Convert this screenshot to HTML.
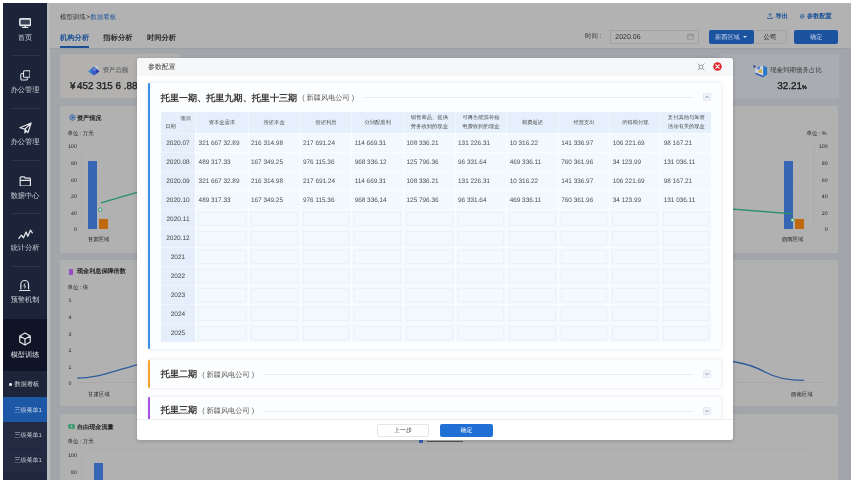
<!DOCTYPE html>
<html lang="zh">
<head>
<meta charset="utf-8">
<title>数据看板</title>
<style>
*{box-sizing:border-box;margin:0;padding:0}
html,body{width:857px;height:487px;background:#fff;overflow:hidden}
body{font-family:"Liberation Sans",sans-serif;position:relative;color:#333;text-rendering:geometricPrecision;filter:blur(0.5px)}
.abs{position:absolute}
#frame{position:absolute;left:3px;top:3px;width:848px;height:477px;background:#a2a6aa;overflow:hidden}
/* sidebar */
#side{position:absolute;left:0;top:0;width:44px;height:477px;background:#1c2439}
.mi{position:absolute;left:0;width:44px;text-align:center;color:#cdd0d7;font-size:7.2px;line-height:8px}
.mi svg{display:block;margin:0 auto 5px}.mi svg.w{margin-bottom:4.5px}
.sep{position:absolute;left:7.6px;width:29.4px;height:1px;background:#2c3449}
.sub{position:absolute;left:0;width:44px;height:25px;line-height:25px;color:#c3c7cf;font-size:6px;padding-left:11.5px}
/* header */
#hdr{position:absolute;left:44px;top:0;width:804px;height:45.3px;background:#b2b2b2;box-shadow:0 0.5px 1.5px rgba(0,0,0,.12)}
.t{position:absolute;white-space:nowrap;line-height:1}
.yl{font-size:5.2px;color:#1c1c1c}
.card{position:absolute;background:#b1b1b1;border-radius:2px}
/* dialog */
#dlg{position:absolute;left:137px;top:58px;width:596px;height:382px;background:#fff;border-radius:3px;overflow:hidden;box-shadow:0 1px 4px rgba(0,0,0,.18)}
#dh{position:absolute;left:0;top:0;width:596px;height:18.3px;background:#f6f7f9}
.pn{position:absolute;left:11px;width:574.2px;background:#fcfdfe;border:1px solid #f0f3f7;border-radius:3px;box-shadow:0 0 4px rgba(60,80,120,.09)}
.bar{position:absolute;left:-1.4px;top:0;bottom:0;width:2.4px;border-radius:1.2px}
.pt{position:absolute;left:11.8px;font-size:9.1px;font-weight:bold;color:#3a3a3a;white-space:nowrap;line-height:12px}
.pt small{font-size:7.2px;font-weight:400;color:#5a5a5a;margin-left:5px;position:relative;top:-0.3px}
.pl{position:absolute;height:1px;background:#eaedf1}
.tg{position:absolute;width:8px;height:8px;border:1px solid #e3e9f2;background:#f1f5fb;border-radius:1px}
/* table */
#tb{position:absolute;left:11.8px;top:28.8px;width:551.2px}
.tr{display:flex;height:19.04px}
.tr.th{height:20.8px}
.c0{width:34.4px;flex:none;background:#e4effb;font-size:6.5px;color:#444;text-align:center;line-height:19.04px;position:relative}
.c{width:51.68px;flex:none;position:relative;font-size:6.4px;color:#444}
.hd span{position:relative;top:1.1px}
.hd{background:#e6f0fc;border-left:1px solid #f2f7fd;display:flex;align-items:center;justify-content:center;text-align:center;font-size:5.3px;line-height:9.4px;color:#4c4c4c}
.hd0 .h0a{position:absolute;right:4px;top:4.4px;font-size:5.3px;line-height:6px;color:#4c4c4c}
.hd0 .h0b{position:absolute;left:4.5px;bottom:2.8px;font-size:5.3px;line-height:6px;color:#4c4c4c}
.diag{position:absolute;left:0;top:0}
.v{border-left:1px solid #fafcff;border-top:1px solid #fafcff;background:#f1f8fe;color:#505050;line-height:18.04px;padding-left:2.4px;white-space:nowrap}
.v i{font-style:normal;position:relative;top:1px}
.d0{border-top:1px solid #ecf4fc;line-height:18.04px;padding-top:1px}
.e i{position:absolute;left:2px;right:2px;top:2px;bottom:2px;border:1px solid #e9f1f9;background:#f3f9fe}
.tr>.c:nth-child(2){width:52.4px}.tr>.c:nth-child(3){width:52.0px}.tr>.c:nth-child(4){width:51.7px}.tr>.c:nth-child(5){width:51.9px}.tr>.c:nth-child(6){width:51.5px}.tr>.c:nth-child(7){width:51.6px}.tr>.c:nth-child(8){width:51.6px}.tr>.c:nth-child(9){width:51.4px}.tr>.c:nth-child(10){width:51.1px}.tr>.c:nth-child(11){width:51.1px}
</style>
</head>
<body>
<div id="frame">

  <!-- main header -->
  <div id="hdr">
    <div class="t" style="left:13px;top:11.9px;font-size:6.4px;color:#2a2a2a">模型训练<span style="margin:0 0.6px">&gt;</span><span style="color:#1d559d">数据看板</span></div>
    <div class="t" style="left:13px;top:30.5px;font-size:7.3px;color:#1a4f96;font-weight:bold">机构分析</div>
    <div class="t" style="left:56.3px;top:30.5px;font-size:7.3px;color:#2b2b2b;font-weight:bold">指标分析</div>
    <div class="t" style="left:99.9px;top:30.5px;font-size:7.3px;color:#2b2b2b;font-weight:bold">时间分析</div>
    <div class="abs" style="left:13px;top:42.7px;width:29px;height:2.6px;background:#1b4f94"></div>

    <svg class="abs" style="left:719.8px;top:10.2px" width="6.2" height="6.2" viewBox="0 0 14 14"><path d="M7 1 L7 9 M4 4 L7 1 L10 4 M1.5 9.5 V12.5 H12.5 V9.5" fill="none" stroke="#1d559d" stroke-width="1.8"/></svg>
    <div class="t" style="left:728.6px;top:11.1px;font-size:6.2px;color:#1b519a;font-weight:bold">导出</div>
    <svg class="abs" style="left:752.4px;top:10.4px" width="6.6" height="6.6" viewBox="0 0 14 14"><circle cx="7" cy="7" r="4" fill="none" stroke="#1d559d" stroke-width="2.4" stroke-dasharray="2 1.2"/><circle cx="7" cy="7" r="1.5" fill="#1d559d"/></svg>
    <div class="t" style="left:760px;top:11.1px;font-size:6.2px;color:#1b519a;font-weight:bold">参数配置</div>

    <div class="t" style="left:538px;top:31.4px;font-size:6.4px;color:#333">时间 :</div>
    <div class="abs" style="left:563.3px;top:27px;width:88.5px;height:13.6px;border:1px solid #a2a2a2;background:#b3b3b3;border-radius:1px"></div>
    <div class="t" style="left:568.3px;top:30.9px;font-size:7px;color:#333">2020.06</div>
    <svg class="abs" style="left:639.8px;top:30.2px" width="7" height="7" viewBox="0 0 14 14"><rect x="1.5" y="3" width="11" height="9.5" fill="none" stroke="#8a8a8a" stroke-width="1.4"/><path d="M1.5 6 H12.5 M4.5 1 V4 M9.5 1 V4" stroke="#8a8a8a" stroke-width="1.4"/></svg>

    <div class="abs" style="left:662px;top:27px;width:78px;height:13.5px;border:1px solid #a3a3a3;background:#b0b0b0;border-radius:2px"></div>
    <div class="abs" style="left:662px;top:27px;width:44.5px;height:13.5px;background:#1b53a0;border-radius:2px"></div>
    <div class="t" style="left:668px;top:31.5px;font-size:6.2px;color:#c9d6ea">新西区域</div>
    <div class="abs" style="left:696.2px;top:33.3px;width:0;height:0;border-left:2px solid transparent;border-right:2px solid transparent;border-top:2.4px solid #d6dfee"></div>
    <div class="t" style="left:716.5px;top:31.5px;font-size:6.4px;color:#222">公司</div>
    <div class="abs" style="left:747px;top:27px;width:44px;height:13.5px;background:#1b53a0;border-radius:2px"></div>
    <div class="t" style="left:763px;top:31.5px;font-size:6.2px;color:#c9d6ea">确定</div>
  </div>

  <!-- stat cards -->
  <div class="card" style="left:56.5px;top:51.4px;width:120px;height:44px;background:#b2b1b0"></div>
  <svg class="abs" style="left:82px;top:57px" width="26" height="22" viewBox="85 60 26 22"><path d="M88.4 71.6 L93.6 66.8 L99.3 71.2 L94.2 75.6 Z" fill="#3a5cc4"/><path d="M88.4 71.6 L91 69.2 L92 73.9 Z" fill="#2b8fd2"/><path d="M99.3 71.2 L96.6 69.2 L96.4 73.7 Z" fill="#1b2fa6"/><path d="M92.2 69.6 L94.2 68 L96.4 69.6 L94.3 71.3 Z" fill="#6b86dc"/><path d="M95 66.6 L97.6 66 L98 68.4 Z" fill="#c9d4e2"/></svg>
  <div class="t" style="left:99.8px;top:65.3px;font-size:6.3px;color:#4a4a4a">资产总额</div>
  <div class="t" style="left:67px;top:79px;font-size:9.9px;color:#1e1e1e;-webkit-text-stroke:0.32px #1e1e1e">¥<span style="margin-left:1.6px">452 315 6 .88</span></div>

  <div class="card" style="left:715px;top:51.4px;width:121px;height:44.4px;background:#a9adb2"></div>
  <svg class="abs" style="left:745px;top:55px" width="30" height="26" viewBox="748 58 30 26"><circle cx="754.4" cy="66.4" r="1.15" fill="#1b3f88"/><path d="M755.4 69.3 L763.2 65.4 L763.2 77.2 L755.4 73.6 Z" fill="#cfd8e4"/><path d="M763.2 65.4 L767.2 67.6 L767.2 74.6 L763.2 77.2 Z" fill="#2a76c9"/><path d="M758.4 70.2 L762 68.8 L762 73.2 L758.4 72.6 Z" fill="#d3b33e"/><path d="M755.4 72.4 L763.2 75.8 L763.2 77.4 L755.4 74 Z" fill="#2e55b6"/><path d="M757.5 67.2 L760 66 L760 69 L757.5 70 Z" fill="#5a7fd6"/></svg>
  <div class="t" style="left:767px;top:65.2px;font-size:6.5px;color:#333">现金到期债务占比</div>
  <div class="t" style="left:774.3px;top:79px;font-size:9.9px;color:#1e1e1e;-webkit-text-stroke:0.32px #1e1e1e">32.21<span style="font-size:5.4px;font-weight:bold">%</span></div>

  <!-- chart card 1 -->
  <div class="card" style="left:56.7px;top:102.8px;width:778.5px;height:147.6px"></div>
  <svg class="abs" style="left:65.5px;top:111.4px" width="7" height="7" viewBox="0 0 14 14"><circle cx="7" cy="7" r="5.4" fill="none" stroke="#1f5aa8" stroke-width="1.6"/><circle cx="7" cy="7" r="2.4" fill="#1f5aa8"/></svg>
  <div class="t" style="left:74px;top:112.7px;font-size:6.1px;color:#222;font-weight:bold">资产情况</div>
  <div class="t" style="left:64.5px;top:128.9px;font-size:5.4px;color:#222">单位 : 万元</div>
  <div class="t" style="left:803.5px;top:128.9px;font-size:5.4px;color:#222">单位 : %</div>
  <div class="abs" style="left:78px;top:143.5px;width:733px;height:82.5px;background:repeating-linear-gradient(to bottom,#b5b5b5 0,#b5b5b5 0.8px,rgba(0,0,0,0) 0.8px,rgba(0,0,0,0) 16.6px);border-left:1px solid #adadad;border-right:1px solid #ababab"></div>
  <div class="t yl" style="right:774.2px;top:142.3px">100</div>
  <div class="t yl" style="right:774.2px;top:159.0px">80</div>
  <div class="t yl" style="right:774.2px;top:175.6px">60</div>
  <div class="t yl" style="right:774.2px;top:192.2px">20</div>
  <div class="t yl" style="right:774.2px;top:208.8px">40</div>
  <div class="t yl" style="right:774.2px;top:225.4px">0</div>
  <div class="t yl" style="right:23.4px;top:142.3px">100</div>
  <div class="t yl" style="right:23.4px;top:159.0px">80</div>
  <div class="t yl" style="right:23.4px;top:175.6px">60</div>
  <div class="t yl" style="right:23.4px;top:192.2px">40</div>
  <div class="t yl" style="right:23.4px;top:208.8px">20</div>
  <div class="t yl" style="right:23.4px;top:225.4px">0</div>
  <div class="abs" style="left:85px;top:158px;width:9px;height:68px;background:#3565b3"></div>
  <div class="abs" style="left:96.1px;top:216.3px;width:9px;height:9.7px;background:#c0690f"></div>
  <div class="abs" style="left:780.5px;top:158px;width:9px;height:68px;background:#3565b3"></div>
  <div class="abs" style="left:792px;top:216.3px;width:9px;height:9.7px;background:#c0690f"></div>
  <svg class="abs" style="left:57px;top:101px" width="778" height="148" viewBox="57 101 778 148"><path d="M98 199.9 L134 189.4 L300 141 L560 192.8 L730 206.2 L789.5 210.8" fill="none" stroke="#2a9068" stroke-width="1.35"/><circle cx="97.3" cy="206.7" r="1.7" fill="#d8e8df" stroke="#2a8f66" stroke-width="0.9"/><circle cx="789.5" cy="217" r="1.7" fill="#d8e8df" stroke="#2a8f66" stroke-width="0.9"/></svg>
  <div class="t" style="left:85px;top:234.8px;font-size:5.3px;color:#222">甘肃区域</div>
  <div class="t" style="left:779px;top:234.8px;font-size:5.3px;color:#222">西南区域</div>

  <!-- chart card 2 -->
  <div class="card" style="left:56.7px;top:256.8px;width:778.5px;height:146px"></div>
  <div class="abs" style="left:66.2px;top:266.2px;width:3.8px;height:5.4px;border-radius:0.8px;background:#8e4fc0"></div>
  <div class="t" style="left:74px;top:266.4px;font-size:6.1px;color:#222;font-weight:bold">现金利息保障倍数</div>
  <div class="t" style="left:64.5px;top:283.2px;font-size:5.4px;color:#222">单位 : 倍</div>
  <div class="abs" style="left:74px;top:297.4px;width:750px;height:83.1px;background:repeating-linear-gradient(to bottom,#b5b5b5 0,#b5b5b5 0.8px,rgba(0,0,0,0) 0.8px,rgba(0,0,0,0) 16.6px);border-left:1px solid #adadad;border-bottom:1px solid #a9a9a9"></div>
  <div class="t yl" style="left:65.6px;top:296.4px">5</div>
  <div class="t yl" style="left:65.6px;top:313.0px">4</div>
  <div class="t yl" style="left:65.6px;top:329.6px">3</div>
  <div class="t yl" style="left:65.6px;top:346.2px">2</div>
  <div class="t yl" style="left:65.6px;top:362.8px">1</div>
  <div class="t yl" style="left:65.6px;top:379.4px">0</div>
  <svg class="abs" style="left:57px;top:257px" width="778" height="146" viewBox="57 257 778 146"><path d="M74.3 375.2 C 92 375.2, 104 370, 134 361.8 C 260 328, 640 330, 730 358.5 C 744 360.5, 754 364.5, 763 369.5 S 787 377.4, 800.8 377.4" fill="none" stroke="#2d5c9c" stroke-width="1.3"/></svg>
  <div class="t" style="left:85px;top:389.5px;font-size:5.4px;color:#222">甘肃区域</div>
  <div class="t" style="left:788px;top:389.5px;font-size:5.4px;color:#222">西南区域</div>

  <!-- chart card 3 -->
  <div class="card" style="left:56.7px;top:411.2px;width:778.5px;height:80px"></div>
  <svg class="abs" style="left:65px;top:420.8px" width="7" height="5" viewBox="0 0 14 10"><rect x="0.5" y="0.5" width="13" height="9" rx="2" fill="#2f9a6a"/><circle cx="7" cy="5" r="2.2" fill="#b1b1b1"/></svg>
  <div class="t" style="left:74px;top:421.7px;font-size:6.1px;color:#222;font-weight:bold">自由现金流量</div>
  <div class="t" style="left:64.5px;top:437.1px;font-size:5.4px;color:#222">单位 : 万元</div>
  <div class="abs" style="left:78px;top:452.2px;width:733px;height:40px;background:repeating-linear-gradient(to bottom,#b5b5b5 0,#b5b5b5 0.8px,rgba(0,0,0,0) 0.8px,rgba(0,0,0,0) 16.6px);border-left:1px solid #adadad"></div>
  <div class="t yl" style="right:774.2px;top:450.5px">100</div>
  <div class="t yl" style="right:774.2px;top:467.8px">80</div>
  <div class="abs" style="left:91px;top:460px;width:9px;height:20px;background:#3565b3"></div>
  <div class="abs" style="left:416px;top:437.2px;width:3.5px;height:2.5px;background:#3565b3"></div>
  <div class="abs" style="left:424px;top:438.2px;width:36px;height:1.2px;background:#555"></div>

  <div class="abs" style="left:44.4px;top:0;width:2.2px;height:477px;background:#b8babc"></div>
  <!-- sidebar -->
  <div id="side">
    <div class="mi" style="top:14.8px"><svg style="margin-bottom:5.6px" width="12.4" height="10.4" viewBox="0 0 24 20"><rect x="1.6" y="1.6" width="20.8" height="12.6" rx="1.6" fill="#3a4258" stroke="#e4e6ea" stroke-width="3"/><path d="M6 18.6 H18 M12 15 V18" stroke="#e4e6ea" stroke-width="2.6"/></svg>首页</div>
    <div class="sep" style="top:52px"></div>
    <div class="mi" style="top:66.9px"><svg style="margin-bottom:5.1px" width="10.8" height="10.8" viewBox="0 0 20 20"><rect x="6.5" y="1.5" width="12" height="12" rx="2" fill="none" stroke="#e4e6ea" stroke-width="2"/><path d="M6 6.5 H3.5 a2 2 0 0 0 -2 2 V16.5 a2 2 0 0 0 2 2 H11.5 a2 2 0 0 0 2 -2 V14" fill="none" stroke="#e4e6ea" stroke-width="2"/></svg>办公管理</div>
    <div class="sep" style="top:104.5px"></div>
    <div class="mi" style="top:119px"><svg style="margin-bottom:4.2px" width="13" height="12" viewBox="0 0 22 20"><path d="M1.5 9.5 L20.5 1.5 L15 18 L10 12 Z M10 12 L20.5 1.5 M10 12 V18.5 L12.5 15" fill="none" stroke="#e4e6ea" stroke-width="2" stroke-linejoin="round"/></svg>办公管理</div>
    <div class="sep" style="top:157px"></div>
    <div class="mi" style="top:172.6px"><svg style="margin-bottom:5.3px" width="12.6" height="10.8" viewBox="0 0 22 20"><path d="M1.5 3.5 a2 2 0 0 1 2 -2 H9 L11 4 H18.5 a2 2 0 0 1 2 2 V16.5 a2 2 0 0 1 -2 2 H3.5 a2 2 0 0 1 -2 -2 Z M1.5 8 H20.5" fill="none" stroke="#e4e6ea" stroke-width="2.2"/></svg>数据中心</div>
    <div class="sep" style="top:210px"></div>
    <div class="mi" style="top:225.6px"><svg style="margin-bottom:4.6px" width="15" height="10.6" viewBox="0 0 26 18"><path d="M1.5 16 L6 10.5 L9.5 15 L14 5 L17 12.5 L21.5 1.8 L24.8 6.5" fill="none" stroke="#e4e6ea" stroke-width="2.2" stroke-linejoin="round" stroke-linecap="round"/></svg>统计分析</div>
    <div class="sep" style="top:262.5px"></div>
    <div class="mi" style="top:276.1px"><svg style="margin-bottom:4.4px" width="13.4" height="13" viewBox="0 0 22 22"><path d="M4.5 17.5 V9 a6.5 6.5 0 0 1 13 0 V17.5 M1.5 19.5 H20.5" fill="none" stroke="#e4e6ea" stroke-width="2"/><path d="M11.5 7.5 L9.5 12 H12.5 L10.5 16" fill="none" stroke="#e4e6ea" stroke-width="1.4"/></svg>预警机制</div>

    <div class="abs" style="left:0;top:315.6px;width:44px;height:52.4px;background:#0f1426"></div>
    <div class="mi" style="top:329.4px;color:#e2e4e8"><svg style="margin-bottom:4.4px" width="14" height="14" viewBox="0 0 24 24"><path d="M12 1.8 L21 7 V17 L12 22.2 L3 17 V7 Z M3 7 L12 12.2 L21 7 M12 12.2 V22.2" fill="none" stroke="#e8e9ec" stroke-width="2" stroke-linejoin="round"/></svg>模型训练</div>
    <div class="abs" style="left:0;top:368px;width:44px;height:26px;background:#1d253b"></div>
    <div class="abs" style="left:6.2px;top:380.2px;width:2.6px;height:2.6px;border-radius:50%;background:#e3e5ea"></div>
    <div class="sub" style="top:369.3px;height:26px;line-height:26px;color:#d5d8de;font-size:6.2px">数据看板</div>
    <div class="abs" style="left:0;top:393.6px;width:44px;height:25.4px;background:#1d58a6"></div>
    <div class="sub" style="top:396px;color:#c7d4e8">三级菜单1</div>
    <div class="abs" style="left:0;top:419px;width:44px;height:50px;background:#232b43"></div>
    <div class="abs" style="left:5px;top:444.5px;width:34px;height:1px;background:#1f2740"></div>
    <div class="sub" style="top:421.2px">三级菜单1</div>
    <div class="sub" style="top:446.2px">三级菜单1</div>
    <div class="abs" style="left:0;top:469px;width:44px;height:8px;background:#20283f"></div>
  </div>
</div>

<!-- dialog -->
<div id="dlg">
  <div id="dh"></div>
  <div class="t" style="left:11px;top:7.2px;font-size:6.9px;color:#444">参数配置</div>
  <svg class="abs" style="left:560.2px;top:4.8px" width="8" height="8" viewBox="0 0 16 16"><rect x="4.5" y="4.5" width="7" height="7" fill="none" stroke="#8d939b" stroke-width="1.6"/><path d="M1 1 L4.5 4.5 M15 1 L11.5 4.5 M1 15 L4.5 11.5 M15 15 L11.5 11.5" stroke="#8d939b" stroke-width="1.6"/></svg>
  <svg class="abs" style="left:576.4px;top:4.2px" width="9" height="9" viewBox="0 0 18 18"><circle cx="9" cy="9" r="8.5" fill="#e0262d"/><path d="M5.6 5.6 L12.4 12.4 M12.4 5.6 L5.6 12.4" stroke="#fff" stroke-width="2.4" stroke-linecap="round"/></svg>

  <!-- panel 1 -->
  <div class="pn" style="top:24px;height:268px">
    <div class="bar" style="background:#3b8fe8"></div>
    <div class="pt" style="top:8.5px">托里一期、托里九期、托里十三期<small>( 新疆风电公司 )</small></div>
    <div class="pl" style="left:214px;top:14.2px;width:331px"></div>
    <div class="tg" style="left:554.2px;top:10px"><svg class="abs" style="left:0;top:0" width="6" height="6" viewBox="0 0 12 12"><path d="M3 7.5 L6 4.5 L9 7.5" fill="none" stroke="#5b6f8c" stroke-width="1.6"/></svg></div>
    <div id="tb">
<div class="tr th"><div class="c0 hd0"><span class="h0a">项目</span><span class="h0b">日期</span><svg class="diag" width="35" height="22" viewBox="0 0 35 22"><line x1="0" y1="0" x2="35" y2="22" stroke="#dbe6f2" stroke-width="0.6"/></svg></div>
<div class="c hd"><span>资本金需求</span></div>
<div class="c hd"><span>偿还本金</span></div>
<div class="c hd"><span>偿还利息</span></div>
<div class="c hd"><span>分润配股利</span></div>
<div class="c hd"><span>销售商品、提供<br>劳务收到的现金</span></div>
<div class="c hd"><span>可再生能源补贴<br>电费收到的现金</span></div>
<div class="c hd"><span>税费返还</span></div>
<div class="c hd"><span>经营支出</span></div>
<div class="c hd"><span>所得税付现</span></div>
<div class="c hd"><span>支付其他与筹资<br>活动有关的现金</span></div>
</div>
<div class="tr"><div class="c0 d0">2020.07</div>
<div class="c v"><i>321 667 32.89</i></div>
<div class="c v"><i>216 314.98</i></div>
<div class="c v"><i>217 691.24</i></div>
<div class="c v"><i>114 669.31</i></div>
<div class="c v"><i>108 336.21</i></div>
<div class="c v"><i>131 226.31</i></div>
<div class="c v"><i>10 316.22</i></div>
<div class="c v"><i>141 336.97</i></div>
<div class="c v"><i>106 221.69</i></div>
<div class="c v"><i>98 167.21</i></div>
</div>
<div class="tr"><div class="c0 d0">2020.08</div>
<div class="c v"><i>489 317.33</i></div>
<div class="c v"><i>167 349.25</i></div>
<div class="c v"><i>976 115.36</i></div>
<div class="c v"><i>968 336.12</i></div>
<div class="c v"><i>125 796.36</i></div>
<div class="c v"><i>96 331.64</i></div>
<div class="c v"><i>469 336.11</i></div>
<div class="c v"><i>760 361.96</i></div>
<div class="c v"><i>34 123.99</i></div>
<div class="c v"><i>131 036.11</i></div>
</div>
<div class="tr"><div class="c0 d0">2020.09</div>
<div class="c v"><i>321 667 32.89</i></div>
<div class="c v"><i>216 314.98</i></div>
<div class="c v"><i>217 691.24</i></div>
<div class="c v"><i>114 669.31</i></div>
<div class="c v"><i>108 336.21</i></div>
<div class="c v"><i>131 226.31</i></div>
<div class="c v"><i>10 316.22</i></div>
<div class="c v"><i>141 336.97</i></div>
<div class="c v"><i>106 221.69</i></div>
<div class="c v"><i>98 167.21</i></div>
</div>
<div class="tr"><div class="c0 d0">2020.10</div>
<div class="c v"><i>489 317.33</i></div>
<div class="c v"><i>167 349.25</i></div>
<div class="c v"><i>976 115.36</i></div>
<div class="c v"><i>968 336.14</i></div>
<div class="c v"><i>125 796.36</i></div>
<div class="c v"><i>96 331.64</i></div>
<div class="c v"><i>469 336.11</i></div>
<div class="c v"><i>760 361.96</i></div>
<div class="c v"><i>34 123.99</i></div>
<div class="c v"><i>131 036.11</i></div>
</div>
<div class="tr"><div class="c0 d0">2020.11</div>
<div class="c v e"><i></i></div>
<div class="c v e"><i></i></div>
<div class="c v e"><i></i></div>
<div class="c v e"><i></i></div>
<div class="c v e"><i></i></div>
<div class="c v e"><i></i></div>
<div class="c v e"><i></i></div>
<div class="c v e"><i></i></div>
<div class="c v e"><i></i></div>
<div class="c v e"><i></i></div>
</div>
<div class="tr"><div class="c0 d0">2020.12</div>
<div class="c v e"><i></i></div>
<div class="c v e"><i></i></div>
<div class="c v e"><i></i></div>
<div class="c v e"><i></i></div>
<div class="c v e"><i></i></div>
<div class="c v e"><i></i></div>
<div class="c v e"><i></i></div>
<div class="c v e"><i></i></div>
<div class="c v e"><i></i></div>
<div class="c v e"><i></i></div>
</div>
<div class="tr"><div class="c0 d0">2021</div>
<div class="c v e"><i></i></div>
<div class="c v e"><i></i></div>
<div class="c v e"><i></i></div>
<div class="c v e"><i></i></div>
<div class="c v e"><i></i></div>
<div class="c v e"><i></i></div>
<div class="c v e"><i></i></div>
<div class="c v e"><i></i></div>
<div class="c v e"><i></i></div>
<div class="c v e"><i></i></div>
</div>
<div class="tr"><div class="c0 d0">2022</div>
<div class="c v e"><i></i></div>
<div class="c v e"><i></i></div>
<div class="c v e"><i></i></div>
<div class="c v e"><i></i></div>
<div class="c v e"><i></i></div>
<div class="c v e"><i></i></div>
<div class="c v e"><i></i></div>
<div class="c v e"><i></i></div>
<div class="c v e"><i></i></div>
<div class="c v e"><i></i></div>
</div>
<div class="tr"><div class="c0 d0">2023</div>
<div class="c v e"><i></i></div>
<div class="c v e"><i></i></div>
<div class="c v e"><i></i></div>
<div class="c v e"><i></i></div>
<div class="c v e"><i></i></div>
<div class="c v e"><i></i></div>
<div class="c v e"><i></i></div>
<div class="c v e"><i></i></div>
<div class="c v e"><i></i></div>
<div class="c v e"><i></i></div>
</div>
<div class="tr"><div class="c0 d0">2024</div>
<div class="c v e"><i></i></div>
<div class="c v e"><i></i></div>
<div class="c v e"><i></i></div>
<div class="c v e"><i></i></div>
<div class="c v e"><i></i></div>
<div class="c v e"><i></i></div>
<div class="c v e"><i></i></div>
<div class="c v e"><i></i></div>
<div class="c v e"><i></i></div>
<div class="c v e"><i></i></div>
</div>
<div class="tr"><div class="c0 d0">2025</div>
<div class="c v e"><i></i></div>
<div class="c v e"><i></i></div>
<div class="c v e"><i></i></div>
<div class="c v e"><i></i></div>
<div class="c v e"><i></i></div>
<div class="c v e"><i></i></div>
<div class="c v e"><i></i></div>
<div class="c v e"><i></i></div>
<div class="c v e"><i></i></div>
<div class="c v e"><i></i></div>
</div>
    </div>
  </div>

  <!-- panel 2 -->
  <div class="pn" style="top:301.3px;height:30.2px">
    <div class="bar" style="background:#f5a32b"></div>
    <div class="pt" style="top:7.5px">托里二期<small>( 新疆风电公司 )</small></div>
    <div class="pl" style="left:114px;top:14px;width:431px"></div>
    <div class="tg" style="left:554.2px;top:9.9px"><svg class="abs" style="left:0;top:0" width="6" height="6" viewBox="0 0 12 12"><path d="M3 4.5 L6 7.5 L9 4.5" fill="none" stroke="#5b6f8c" stroke-width="1.6"/></svg></div>
  </div>

  <!-- panel 3 -->
  <div class="pn" style="top:337.6px;height:29.4px">
    <div class="bar" style="background:#a550e6"></div>
    <div class="pt" style="top:7.5px">托里三期<small>( 新疆风电公司 )</small></div>
    <div class="pl" style="left:114px;top:14.2px;width:431px"></div>
    <div class="tg" style="left:554.2px;top:10px"><svg class="abs" style="left:0;top:0" width="6" height="6" viewBox="0 0 12 12"><path d="M3 4.5 L6 7.5 L9 4.5" fill="none" stroke="#5b6f8c" stroke-width="1.6"/></svg></div>
  </div>

  <!-- footer -->
  <div class="abs" style="left:0;top:360.8px;width:596px;height:21.2px;background:#fff;border-top:1px solid #eceff3"></div>
  <div class="abs" style="left:240px;top:366px;width:52px;height:13px;border:1px solid #e3e6ea;border-radius:2px;background:#fff"></div>
  <div class="t" style="left:257px;top:369.5px;font-size:6px;color:#444">上一步</div>
  <div class="abs" style="left:303px;top:366px;width:52.8px;height:13px;border-radius:2px;background:#1f6fd4"></div>
  <div class="t" style="left:323.5px;top:369.5px;font-size:6px;color:#fff">确定</div>
</div>
</body>
</html>
